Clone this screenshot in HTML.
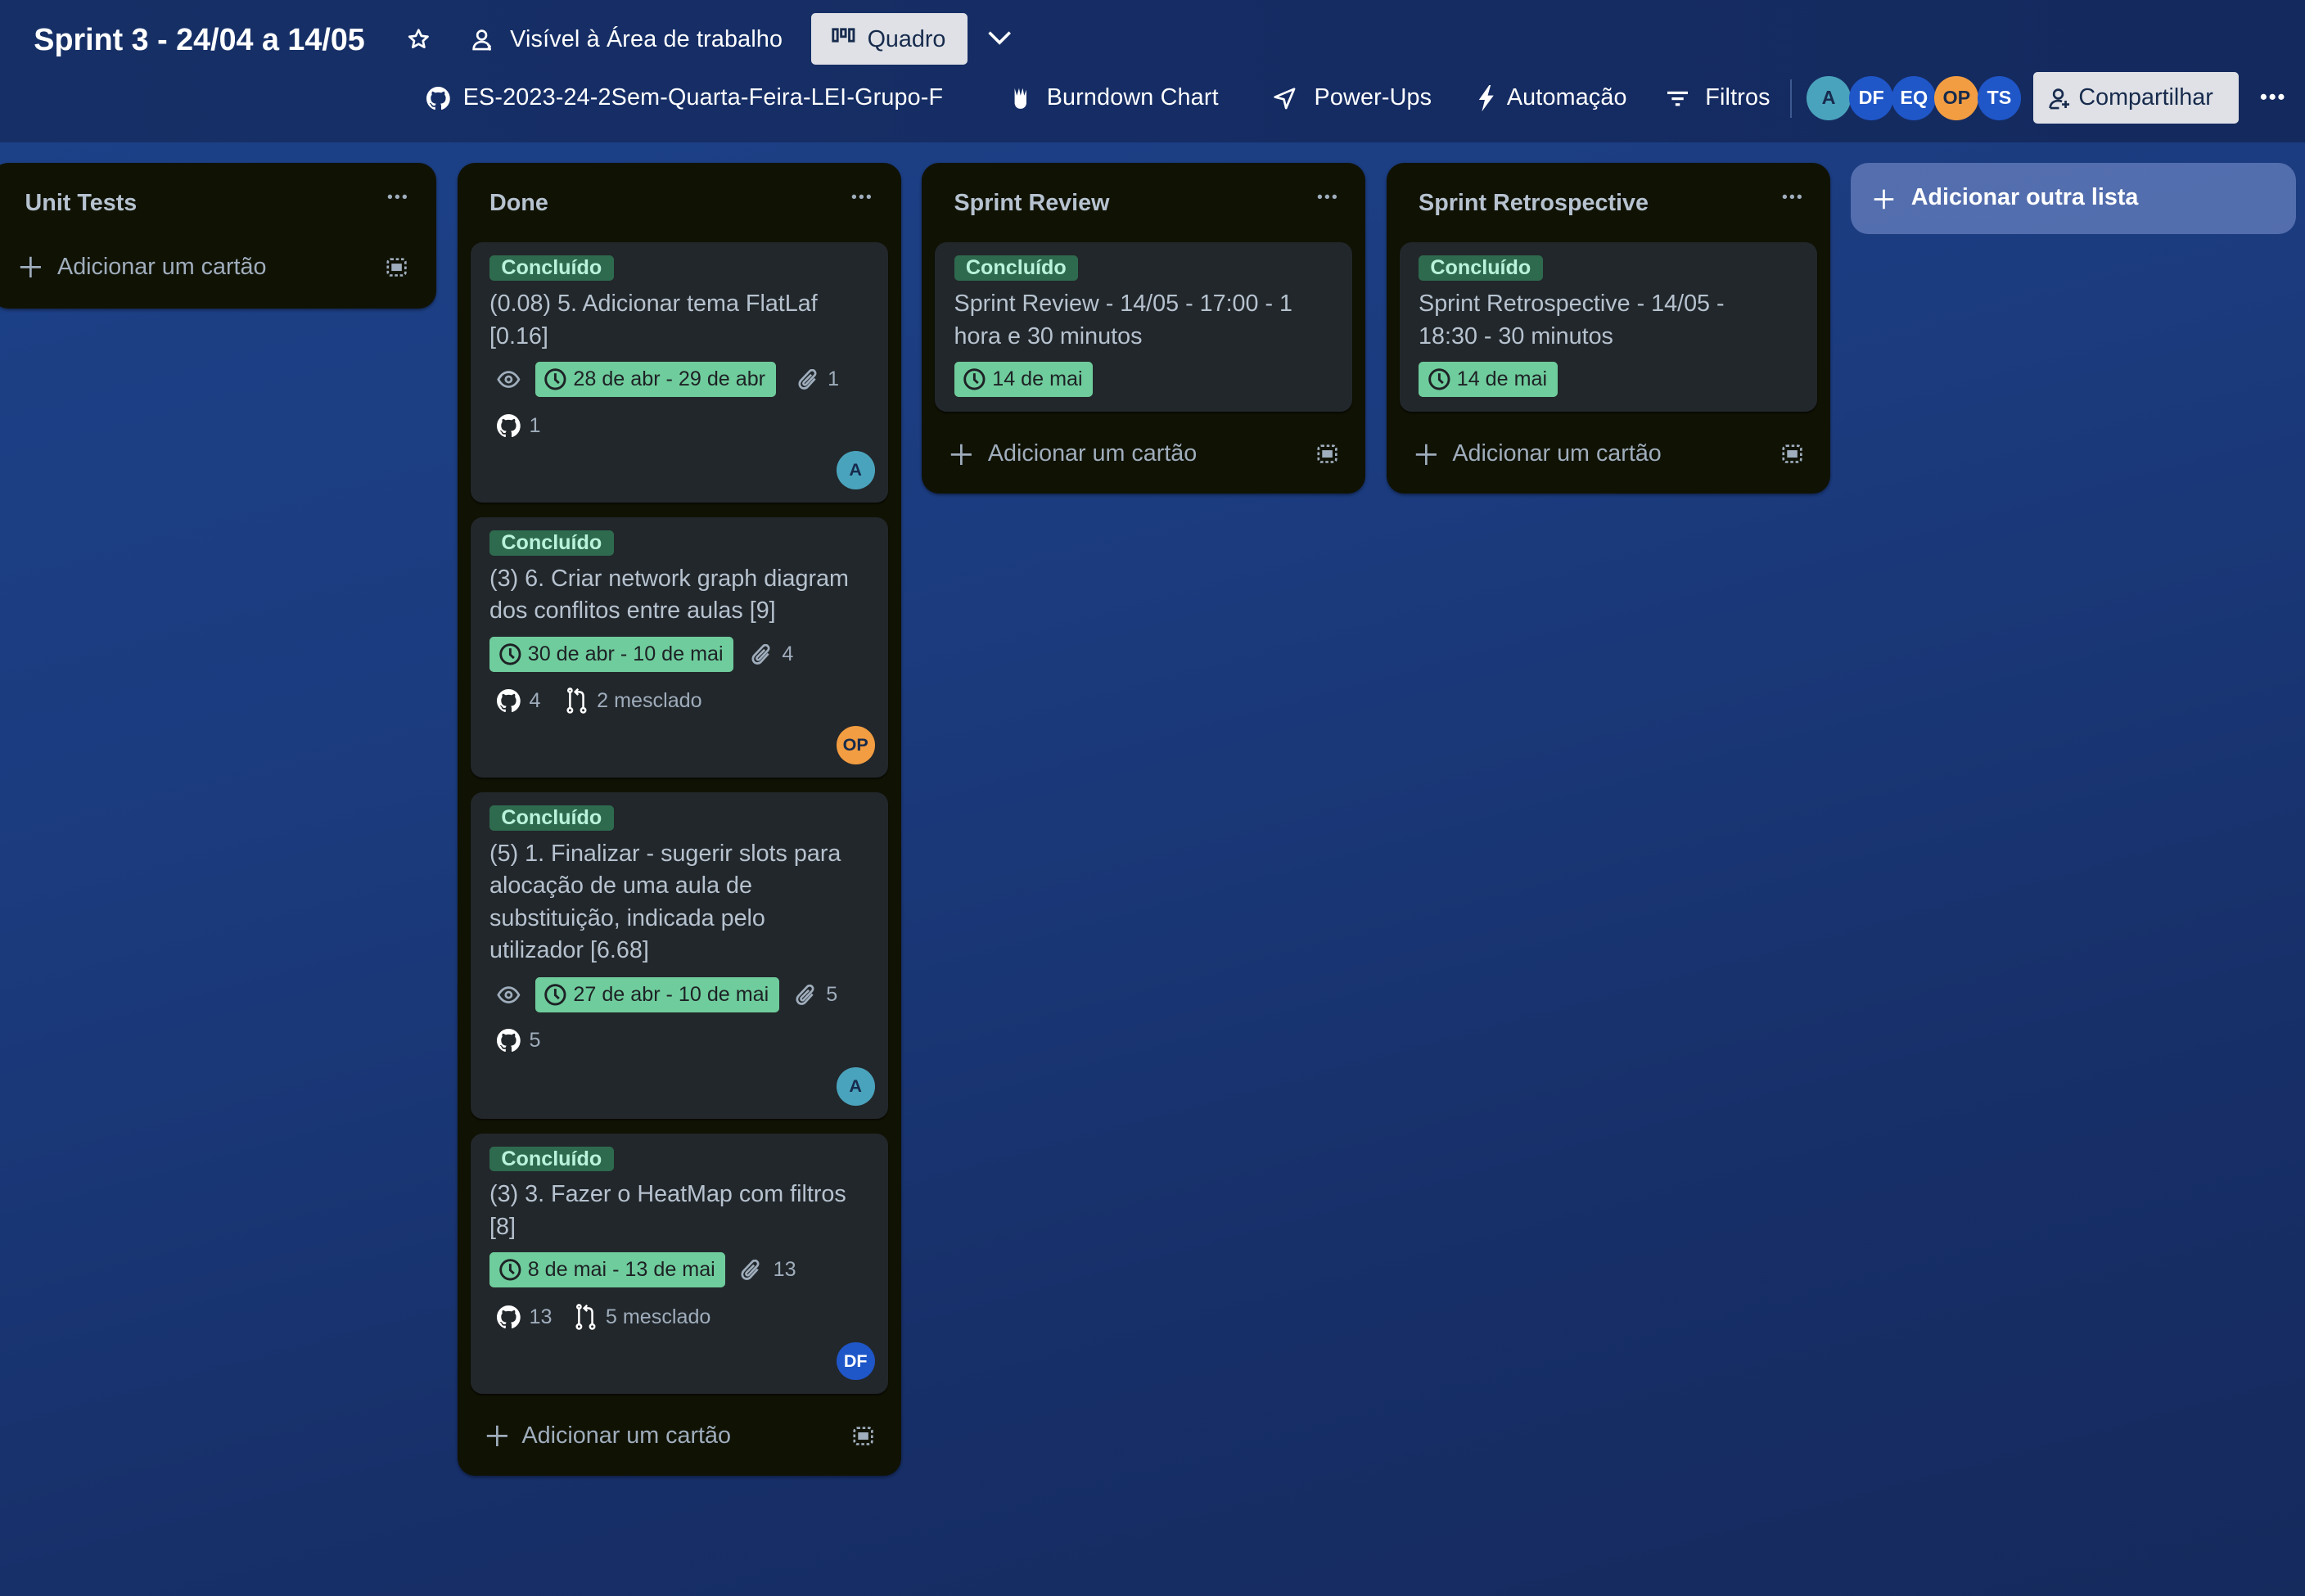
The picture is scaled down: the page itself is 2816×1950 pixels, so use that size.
<!DOCTYPE html>
<html><head><meta charset="utf-8"><style>
*{box-sizing:border-box;margin:0;padding:0}
html,body{width:2816px;height:1950px;overflow:hidden}
body{font-family:"Liberation Sans",Arial,sans-serif;background:#19387a}
#root{zoom:1.795918;width:1568px;height:1086px;position:relative;overflow:hidden;
background:linear-gradient(165deg,#1d4289 0%,#1b3b7e 40%,#172f68 75%,#152a5d 100%)}
.hdr{position:absolute;left:0;top:0;width:1568px;height:97px;background:linear-gradient(90deg,#163067,#152c63 60%,#142a5e)}
.a{position:absolute;white-space:nowrap}
.w{color:#fff;font-size:16px;line-height:20px;letter-spacing:0.1px}
.list{position:absolute;background:#101204;border-radius:12px;box-shadow:0 1px 2px rgba(0,0,0,.4)}
.lt{position:absolute;left:22px;top:18px;font-size:16px;font-weight:bold;color:#b6c2cf;line-height:18px}
.dots{position:absolute;top:15px;width:16px;height:16px}
.card{position:absolute;background:#22272b;border-radius:8px;box-shadow:0 1px 1px rgba(0,0,0,.5)}
.lab{position:absolute;left:13px;top:9px;height:17px;padding:0 8px;background:#2e6a4e;color:#baf3db;font-size:14px;font-weight:bold;line-height:17px;border-radius:3px}
.ttl{position:absolute;left:13px;top:31px;width:250px;font-size:16px;line-height:22px;color:#b6c2cf}
.due{position:absolute;height:24px;background:#6fcc9c;color:#1d2125;font-size:14px;line-height:24px;border-radius:3px;padding-left:26px;padding-right:7px;white-space:nowrap}
.due svg{position:absolute;left:6px;top:4px}
.m{position:absolute;font-size:14px;line-height:16px;color:#9fadbc;white-space:nowrap}
.av{position:absolute;width:26px;height:26px;border-radius:50%;font-size:12px;font-weight:bold;text-align:center;line-height:26px;color:#172b4d}
.add{position:absolute;font-size:16px;color:#9fadbc;line-height:20px;white-space:nowrap}
</style></head><body><div id="root">
<div class="hdr"></div>
<!-- row 1 -->
<div class="a" style="left:23px;top:14px;color:#fff;font-size:21px;font-weight:bold;line-height:26px">Sprint 3 - 24/04 a 14/05</div>
<svg class="a" style="left:277px;top:19px" width="16" height="16" viewBox="0 0 16 16"><path d="M8 1.5l1.9 4 4.3.5-3.2 2.9.9 4.3L8 11l-3.9 2.2.9-4.3L1.8 6l4.3-.5z" fill="none" stroke="#fff" stroke-width="1.5" stroke-linejoin="round"/></svg>
<svg class="a" style="left:321px;top:19px" width="16" height="16" viewBox="0 0 16 16" fill="none" stroke="#fff" stroke-width="1.5"><circle cx="7" cy="5" r="3"/><path d="M1.5 14.5c0-3 2.3-5 5.5-5s5.5 2 5.5 5z"/><path d="M11 11.5l2 1.5M11 13.5l2 1.5"/></svg>
<div class="a w" style="left:347px;top:17px">Visível à Área de trabalho</div>
<div class="a" style="left:552px;top:9px;width:106px;height:35px;background:#dfe1e6;border-radius:3px"></div>
<svg class="a" style="left:566px;top:19px" width="16" height="12" viewBox="0 0 16 12" fill="none" stroke="#172b4d" stroke-width="1.6"><rect x="1" y="1" width="3" height="8"/><rect x="6.5" y="1" width="3" height="5"/><rect x="12" y="1" width="3" height="8"/></svg>
<div class="a" style="left:590px;top:17px;color:#172b4d;font-size:16px;line-height:20px">Quadro</div>
<svg class="a" style="left:671px;top:20px" width="18" height="12" viewBox="0 0 18 12"><path d="M2 2l7 7 7-7" fill="none" stroke="#fff" stroke-width="2"/></svg>
<!-- row 2 -->
<svg class="a" style="left:290px;top:59px" width="16" height="16" viewBox="0 0 16 16"><path fill="#fff" d="M8 0C3.58 0 0 3.58 0 8c0 3.54 2.29 6.53 5.47 7.59.4.07.55-.17.55-.38v-1.49c-2.01.37-2.53-.49-2.69-.94-.09-.23-.48-.94-.82-1.13-.28-.15-.68-.52-.01-.53.63-.01 1.08.58 1.23.82.72 1.21 1.87.87 2.33.66.07-.52.28-.87.51-1.07-1.78-.2-3.64-.89-3.64-3.95 0-.87.31-1.59.82-2.15-.08-.2-.36-1.02.08-2.12 0 0 .67-.21 2.2.82a7.4 7.4 0 014 0c1.53-1.04 2.2-.82 2.2-.82.44 1.1.16 1.92.08 2.12.51.56.82 1.27.82 2.15 0 3.07-1.87 3.75-3.65 3.95.29.25.54.73.54 1.48v2.2c0 .21.15.46.55.38A8 8 0 0016 8c0-4.42-3.58-8-8-8z"/></svg>
<div class="a w" style="left:315px;top:57px">ES-2023-24-2Sem-Quarta-Feira-LEI-Grupo-F</div>
<svg class="a" style="left:688px;top:59px" width="12" height="16" viewBox="0 0 12 16"><path d="M2 1l1.5 5L5 1l1 5 1.5-5 1 5L10 2v9c0 2-1.5 4-4 4s-4-2-4-4z" fill="#fff"/></svg>
<div class="a w" style="left:712px;top:57px">Burndown Chart</div>
<svg class="a" style="left:866px;top:59px" width="16" height="16" viewBox="0 0 16 16"><path d="M14.5 1.5L1.5 7l6 1.5 1.5 6z" fill="none" stroke="#fff" stroke-width="1.5" stroke-linejoin="round"/></svg>
<div class="a w" style="left:894px;top:57px">Power-Ups</div>
<svg class="a" style="left:1005px;top:58px" width="12" height="18" viewBox="0 0 12 18"><path d="M8 0L1 10h4l-2 8 8-11H7l2-7z" fill="#fff"/></svg>
<div class="a w" style="left:1025px;top:57px">Automação</div>
<svg class="a" style="left:1134px;top:61px" width="14" height="12" viewBox="0 0 14 12" fill="#fff"><rect x="0" y="1" width="14" height="1.8"/><rect x="3" y="5" width="8" height="1.8"/><rect x="5.5" y="9" width="3" height="1.8"/></svg>
<div class="a w" style="left:1160px;top:57px">Filtros</div>
<div class="a" style="left:1218px;top:54px;width:1px;height:26px;background:#3d5a91"></div>
<div class="a" style="left:1229px;top:52px;width:30px;height:30px;border-radius:50%;background:#4aa3bd;color:#172b4d;font-size:13px;font-weight:bold;text-align:center;line-height:30px">A</div>
<div class="a" style="left:1258px;top:52px;width:30px;height:30px;border-radius:50%;background:#1f56c8;color:#fff;font-size:13px;font-weight:bold;text-align:center;line-height:30px">DF</div>
<div class="a" style="left:1287px;top:52px;width:30px;height:30px;border-radius:50%;background:#1f56c8;color:#fff;font-size:13px;font-weight:bold;text-align:center;line-height:30px">EQ</div>
<div class="a" style="left:1316px;top:52px;width:30px;height:30px;border-radius:50%;background:#f29d41;color:#172b4d;font-size:13px;font-weight:bold;text-align:center;line-height:30px">OP</div>
<div class="a" style="left:1345px;top:52px;width:30px;height:30px;border-radius:50%;background:#1f56c8;color:#fff;font-size:13px;font-weight:bold;text-align:center;line-height:30px">TS</div>
<div class="a" style="left:1383px;top:49px;width:140px;height:35px;background:#dfe1e6;border-radius:3px"></div>
<svg class="a" style="left:1393px;top:59px" width="16" height="16" viewBox="0 0 16 16" fill="none" stroke="#172b4d" stroke-width="1.5"><circle cx="7" cy="5" r="3"/><path d="M1.5 14.5c0-3 2.3-5 5.5-5 1 0 1.8.2 2.5.5M1.5 14.5h6M12 9.5v5M9.5 12h5"/></svg>
<div class="a" style="left:1414px;top:57px;color:#172b4d;font-size:16px;line-height:20px">Compartilhar</div>
<svg class="a" style="left:1537px;top:63px" width="18" height="6" viewBox="0 0 18 6" fill="#fff"><circle cx="3" cy="3" r="2"/><circle cx="9" cy="3" r="2"/><circle cx="15" cy="3" r="2"/></svg>

<!-- lists -->
<div class="list" style="left:-6px;top:111px;width:303px;height:99px">
 <div class="lt" style="left:23px">Unit Tests</div>
 <svg class="dots" style="left:268px" viewBox="0 0 16 16" fill="#9fadbc"><circle cx="3" cy="8" r="1.5"/><circle cx="8" cy="8" r="1.5"/><circle cx="13" cy="8" r="1.5"/></svg>
 <svg class="a" style="left:19px;top:63px" width="16" height="16" viewBox="0 0 16 16" stroke="#9fadbc" stroke-width="1.5"><path d="M8 1v14M1 8h14"/></svg>
 <div class="add" style="left:45px;top:61px">Adicionar um cartão</div>
 <svg class="a" style="left:269px;top:64px" width="14" height="14" viewBox="0 0 14 14" fill="none" stroke="#9fadbc" stroke-width="1.5"><rect x="1" y="1.5" width="12" height="11" rx="2" stroke-dasharray="2 1.5"/><rect x="3.5" y="4.5" width="7" height="5" fill="#9fadbc" stroke="none"/></svg>
</div>

<div class="list" style="left:311px;top:111px;width:302px;height:893px">
 <div class="lt">Done</div>
 <svg class="dots" style="left:267px" viewBox="0 0 16 16" fill="#9fadbc"><circle cx="3" cy="8" r="1.5"/><circle cx="8" cy="8" r="1.5"/><circle cx="13" cy="8" r="1.5"/></svg>
 <svg class="a" style="left:19px;top:858px" width="16" height="16" viewBox="0 0 16 16" stroke="#9fadbc" stroke-width="1.5"><path d="M8 1v14M1 8h14"/></svg>
 <div class="add" style="left:44px;top:856px">Adicionar um cartão</div>
 <svg class="a" style="left:269px;top:859px" width="14" height="14" viewBox="0 0 14 14" fill="none" stroke="#9fadbc" stroke-width="1.5"><rect x="1" y="1.5" width="12" height="11" rx="2" stroke-dasharray="2 1.5"/><rect x="3.5" y="4.5" width="7" height="5" fill="#9fadbc" stroke="none"/></svg>
</div>

<div class="list" style="left:627px;top:111px;width:302px;height:225px">
 <div class="lt">Sprint Review</div>
 <svg class="dots" style="left:268px" viewBox="0 0 16 16" fill="#9fadbc"><circle cx="3" cy="8" r="1.5"/><circle cx="8" cy="8" r="1.5"/><circle cx="13" cy="8" r="1.5"/></svg>
 <svg class="a" style="left:19px;top:190px" width="16" height="16" viewBox="0 0 16 16" stroke="#9fadbc" stroke-width="1.5"><path d="M8 1v14M1 8h14"/></svg>
 <div class="add" style="left:45px;top:188px">Adicionar um cartão</div>
 <svg class="a" style="left:269px;top:191px" width="14" height="14" viewBox="0 0 14 14" fill="none" stroke="#9fadbc" stroke-width="1.5"><rect x="1" y="1.5" width="12" height="11" rx="2" stroke-dasharray="2 1.5"/><rect x="3.5" y="4.5" width="7" height="5" fill="#9fadbc" stroke="none"/></svg>
</div>

<div class="list" style="left:943px;top:111px;width:302px;height:225px">
 <div class="lt">Sprint Retrospective</div>
 <svg class="dots" style="left:268px" viewBox="0 0 16 16" fill="#9fadbc"><circle cx="3" cy="8" r="1.5"/><circle cx="8" cy="8" r="1.5"/><circle cx="13" cy="8" r="1.5"/></svg>
 <svg class="a" style="left:19px;top:190px" width="16" height="16" viewBox="0 0 16 16" stroke="#9fadbc" stroke-width="1.5"><path d="M8 1v14M1 8h14"/></svg>
 <div class="add" style="left:45px;top:188px">Adicionar um cartão</div>
 <svg class="a" style="left:269px;top:191px" width="14" height="14" viewBox="0 0 14 14" fill="none" stroke="#9fadbc" stroke-width="1.5"><rect x="1" y="1.5" width="12" height="11" rx="2" stroke-dasharray="2 1.5"/><rect x="3.5" y="4.5" width="7" height="5" fill="#9fadbc" stroke="none"/></svg>
</div>

<div class="a" style="left:1259px;top:111px;width:303px;height:48px;background:rgba(140,160,220,.5);border-radius:12px"></div>
<svg class="a" style="left:1274px;top:128px" width="15" height="15" viewBox="0 0 16 16" stroke="#fff" stroke-width="1.6"><path d="M8 1v14M1 8h14"/></svg>
<div class="a" style="left:1300px;top:125px;color:#fff;font-size:16px;font-weight:bold;line-height:20px">Adicionar outra lista</div>

<!-- Done cards -->
<div class="card" style="left:320px;top:165px;width:284px;height:177px">
 <div class="lab">Concluído</div>
 <div class="ttl">(0.08) 5. Adicionar tema FlatLaf [0.16]</div>
 <svg class="a" style="left:18px;top:86px" width="16" height="14" viewBox="0 0 16 14" fill="none" stroke="#9fadbc" stroke-width="1.5"><path d="M1 7c2-3.5 4.5-5 7-5s5 1.5 7 5c-2 3.5-4.5 5-7 5S3 10.5 1 7z"/><circle cx="8" cy="7" r="2"/></svg>
 <div class="due" style="left:44px;top:81px"><svg width="16" height="16" viewBox="0 0 16 16" fill="none" stroke="#1d2125" stroke-width="1.6"><circle cx="8" cy="8" r="6.5"/><path d="M8 4v4.3l2.5 2.3"/></svg>28 de abr - 29 de abr</div>
 <svg class="a" style="left:223px;top:86px" width="14" height="15" viewBox="0 0 14 15" fill="none" stroke="#9fadbc" stroke-width="1.5"><path d="M11.5 6.5l-5 5.5c-1.3 1.4-3.4 1.4-4.6.2s-1.2-3.2.1-4.6L8 1.3c.9-.9 2.3-.9 3.1 0 .9.9.9 2.3 0 3.1L5.4 10.4c-.4.4-1.1.4-1.5 0s-.4-1.1 0-1.5L9 3.8"/></svg>
 <div class="m" style="left:243px;top:85px">1</div>
 <svg class="a" style="left:18px;top:117px" width="16" height="16" viewBox="0 0 16 16"><path fill="#fff" d="M8 0C3.58 0 0 3.58 0 8c0 3.54 2.29 6.53 5.47 7.59.4.07.55-.17.55-.38v-1.49c-2.01.37-2.53-.49-2.69-.94-.09-.23-.48-.94-.82-1.13-.28-.15-.68-.52-.01-.53.63-.01 1.08.58 1.23.82.72 1.21 1.87.87 2.33.66.07-.52.28-.87.51-1.07-1.78-.2-3.64-.89-3.64-3.95 0-.87.31-1.59.82-2.15-.08-.2-.36-1.02.08-2.12 0 0 .67-.21 2.2.82a7.4 7.4 0 014 0c1.53-1.04 2.2-.82 2.2-.82.44 1.1.16 1.92.08 2.12.51.56.82 1.27.82 2.15 0 3.07-1.87 3.75-3.65 3.95.29.25.54.73.54 1.48v2.2c0 .21.15.46.55.38A8 8 0 0016 8c0-4.42-3.58-8-8-8z"/></svg>
 <div class="m" style="left:40px;top:117px">1</div>
 <div class="av" style="left:249px;top:142px;background:#4aa3bd">A</div>
</div>

<div class="card" style="left:320px;top:352px;width:284px;height:177px">
 <div class="lab">Concluído</div>
 <div class="ttl">(3) 6. Criar network graph diagram dos conflitos entre aulas [9]</div>
 <div class="due" style="left:13px;top:81px"><svg width="16" height="16" viewBox="0 0 16 16" fill="none" stroke="#1d2125" stroke-width="1.6"><circle cx="8" cy="8" r="6.5"/><path d="M8 4v4.3l2.5 2.3"/></svg>30 de abr - 10 de mai</div>
 <svg class="a" style="left:191px;top:86px" width="14" height="15" viewBox="0 0 14 15" fill="none" stroke="#9fadbc" stroke-width="1.5"><path d="M11.5 6.5l-5 5.5c-1.3 1.4-3.4 1.4-4.6.2s-1.2-3.2.1-4.6L8 1.3c.9-.9 2.3-.9 3.1 0 .9.9.9 2.3 0 3.1L5.4 10.4c-.4.4-1.1.4-1.5 0s-.4-1.1 0-1.5L9 3.8"/></svg>
 <div class="m" style="left:212px;top:85px">4</div>
 <svg class="a" style="left:18px;top:117px" width="16" height="16" viewBox="0 0 16 16"><path fill="#fff" d="M8 0C3.58 0 0 3.58 0 8c0 3.54 2.29 6.53 5.47 7.59.4.07.55-.17.55-.38v-1.49c-2.01.37-2.53-.49-2.69-.94-.09-.23-.48-.94-.82-1.13-.28-.15-.68-.52-.01-.53.63-.01 1.08.58 1.23.82.72 1.21 1.87.87 2.33.66.07-.52.28-.87.51-1.07-1.78-.2-3.64-.89-3.64-3.95 0-.87.31-1.59.82-2.15-.08-.2-.36-1.02.08-2.12 0 0 .67-.21 2.2.82a7.4 7.4 0 014 0c1.53-1.04 2.2-.82 2.2-.82.44 1.1.16 1.92.08 2.12.51.56.82 1.27.82 2.15 0 3.07-1.87 3.75-3.65 3.95.29.25.54.73.54 1.48v2.2c0 .21.15.46.55.38A8 8 0 0016 8c0-4.42-3.58-8-8-8z"/></svg>
 <div class="m" style="left:40px;top:117px">4</div>
 <svg class="a" style="left:65px;top:116px" width="16" height="18" viewBox="0 0 16 18" fill="none" stroke="#fff" stroke-width="1.4"><path d="M3 3v11M12 14V6c0-2-1-3-3-3H7"/><path d="M8.5 1L6.5 3l2 2"/><circle cx="3" cy="15.5" r="1.5"/><circle cx="12" cy="15.5" r="1.5"/><circle cx="3" cy="2" r="1.2"/></svg>
 <div class="m" style="left:86px;top:117px">2 mesclado</div>
 <div class="av" style="left:249px;top:142px;background:#f29d41">OP</div>
</div>

<div class="card" style="left:320px;top:539px;width:284px;height:222px">
 <div class="lab">Concluído</div>
 <div class="ttl">(5) 1. Finalizar - sugerir slots para alocação de uma aula de substituição, indicada pelo utilizador [6.68]</div>
 <svg class="a" style="left:18px;top:131px" width="16" height="14" viewBox="0 0 16 14" fill="none" stroke="#9fadbc" stroke-width="1.5"><path d="M1 7c2-3.5 4.5-5 7-5s5 1.5 7 5c-2 3.5-4.5 5-7 5S3 10.5 1 7z"/><circle cx="8" cy="7" r="2"/></svg>
 <div class="due" style="left:44px;top:126px"><svg width="16" height="16" viewBox="0 0 16 16" fill="none" stroke="#1d2125" stroke-width="1.6"><circle cx="8" cy="8" r="6.5"/><path d="M8 4v4.3l2.5 2.3"/></svg>27 de abr - 10 de mai</div>
 <svg class="a" style="left:221px;top:131px" width="14" height="15" viewBox="0 0 14 15" fill="none" stroke="#9fadbc" stroke-width="1.5"><path d="M11.5 6.5l-5 5.5c-1.3 1.4-3.4 1.4-4.6.2s-1.2-3.2.1-4.6L8 1.3c.9-.9 2.3-.9 3.1 0 .9.9.9 2.3 0 3.1L5.4 10.4c-.4.4-1.1.4-1.5 0s-.4-1.1 0-1.5L9 3.8"/></svg>
 <div class="m" style="left:242px;top:130px">5</div>
 <svg class="a" style="left:18px;top:161px" width="16" height="16" viewBox="0 0 16 16"><path fill="#fff" d="M8 0C3.58 0 0 3.58 0 8c0 3.54 2.29 6.53 5.47 7.59.4.07.55-.17.55-.38v-1.49c-2.01.37-2.53-.49-2.69-.94-.09-.23-.48-.94-.82-1.13-.28-.15-.68-.52-.01-.53.63-.01 1.08.58 1.23.82.72 1.21 1.87.87 2.33.66.07-.52.28-.87.51-1.07-1.78-.2-3.64-.89-3.64-3.95 0-.87.31-1.59.82-2.15-.08-.2-.36-1.02.08-2.12 0 0 .67-.21 2.2.82a7.4 7.4 0 014 0c1.53-1.04 2.2-.82 2.2-.82.44 1.1.16 1.92.08 2.12.51.56.82 1.27.82 2.15 0 3.07-1.87 3.75-3.65 3.95.29.25.54.73.54 1.48v2.2c0 .21.15.46.55.38A8 8 0 0016 8c0-4.42-3.58-8-8-8z"/></svg>
 <div class="m" style="left:40px;top:161px">5</div>
 <div class="av" style="left:249px;top:187px;background:#4aa3bd">A</div>
</div>

<div class="card" style="left:320px;top:771px;width:284px;height:177px">
 <div class="lab">Concluído</div>
 <div class="ttl">(3) 3. Fazer o HeatMap com filtros [8]</div>
 <div class="due" style="left:13px;top:81px"><svg width="16" height="16" viewBox="0 0 16 16" fill="none" stroke="#1d2125" stroke-width="1.6"><circle cx="8" cy="8" r="6.5"/><path d="M8 4v4.3l2.5 2.3"/></svg>8 de mai - 13 de mai</div>
 <svg class="a" style="left:184px;top:86px" width="14" height="15" viewBox="0 0 14 15" fill="none" stroke="#9fadbc" stroke-width="1.5"><path d="M11.5 6.5l-5 5.5c-1.3 1.4-3.4 1.4-4.6.2s-1.2-3.2.1-4.6L8 1.3c.9-.9 2.3-.9 3.1 0 .9.9.9 2.3 0 3.1L5.4 10.4c-.4.4-1.1.4-1.5 0s-.4-1.1 0-1.5L9 3.8"/></svg>
 <div class="m" style="left:206px;top:85px">13</div>
 <svg class="a" style="left:18px;top:117px" width="16" height="16" viewBox="0 0 16 16"><path fill="#fff" d="M8 0C3.58 0 0 3.58 0 8c0 3.54 2.29 6.53 5.47 7.59.4.07.55-.17.55-.38v-1.49c-2.01.37-2.53-.49-2.69-.94-.09-.23-.48-.94-.82-1.13-.28-.15-.68-.52-.01-.53.63-.01 1.08.58 1.23.82.72 1.21 1.87.87 2.33.66.07-.52.28-.87.51-1.07-1.78-.2-3.64-.89-3.64-3.95 0-.87.31-1.59.82-2.15-.08-.2-.36-1.02.08-2.12 0 0 .67-.21 2.2.82a7.4 7.4 0 014 0c1.53-1.04 2.2-.82 2.2-.82.44 1.1.16 1.92.08 2.12.51.56.82 1.27.82 2.15 0 3.07-1.87 3.75-3.65 3.95.29.25.54.73.54 1.48v2.2c0 .21.15.46.55.38A8 8 0 0016 8c0-4.42-3.58-8-8-8z"/></svg>
 <div class="m" style="left:40px;top:117px">13</div>
 <svg class="a" style="left:71px;top:116px" width="16" height="18" viewBox="0 0 16 18" fill="none" stroke="#fff" stroke-width="1.4"><path d="M3 3v11M12 14V6c0-2-1-3-3-3H7"/><path d="M8.5 1L6.5 3l2 2"/><circle cx="3" cy="15.5" r="1.5"/><circle cx="12" cy="15.5" r="1.5"/><circle cx="3" cy="2" r="1.2"/></svg>
 <div class="m" style="left:92px;top:117px">5 mesclado</div>
 <div class="av" style="left:249px;top:142px;background:#1f56c8;color:#fff">DF</div>
</div>

<!-- Sprint Review card -->
<div class="card" style="left:636px;top:165px;width:284px;height:115px">
 <div class="lab">Concluído</div>
 <div class="ttl">Sprint Review - 14/05 - 17:00 - 1 hora e 30 minutos</div>
 <div class="due" style="left:13px;top:81px"><svg width="16" height="16" viewBox="0 0 16 16" fill="none" stroke="#1d2125" stroke-width="1.6"><circle cx="8" cy="8" r="6.5"/><path d="M8 4v4.3l2.5 2.3"/></svg>14 de mai</div>
</div>
<div class="card" style="left:952px;top:165px;width:284px;height:115px">
 <div class="lab">Concluído</div>
 <div class="ttl">Sprint Retrospective - 14/05 -<br>18:30 - 30 minutos</div>
 <div class="due" style="left:13px;top:81px"><svg width="16" height="16" viewBox="0 0 16 16" fill="none" stroke="#1d2125" stroke-width="1.6"><circle cx="8" cy="8" r="6.5"/><path d="M8 4v4.3l2.5 2.3"/></svg>14 de mai</div>
</div>
</div></body></html>
